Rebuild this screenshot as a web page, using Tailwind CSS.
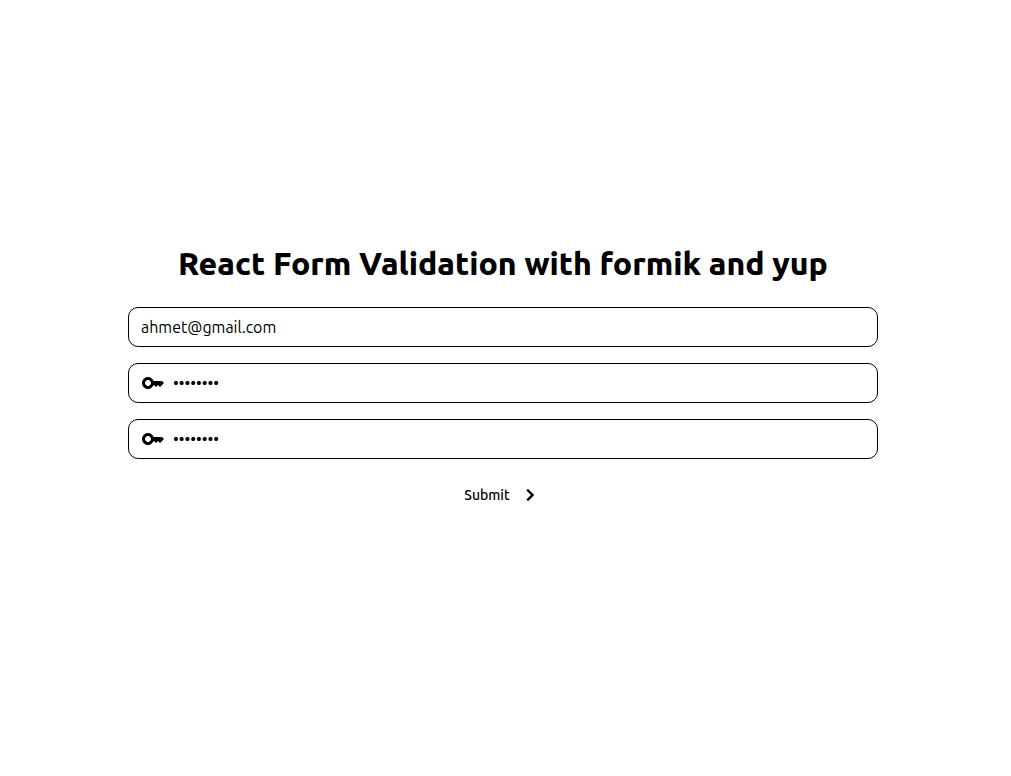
<!DOCTYPE html>
<html lang="en">
<head>
<meta charset="utf-8">
<meta name="viewport" content="width=device-width, initial-scale=1">
<title>React Form Validation</title>
<script src="https://cdn.jsdelivr.net/npm/@tailwindcss/browser@4"></script>
</head>
<body class="bg-white text-black font-['Ubuntu','Noto_Sans',sans-serif]">
<main class="flex min-h-screen flex-col items-center justify-center pl-32 pr-[133px] pb-6">
  <h1 class="mb-[18px] text-center text-[32px] leading-[52px] font-extrabold whitespace-nowrap">React Form Validation with formik and yup</h1>
  <form class="flex w-full flex-col gap-4">
    <input type="email" aria-label="Email" value="ahmet@gmail.com" class="h-10 w-full rounded-[10px] border border-black px-3 text-base font-[450] outline-none">
    <label class="flex h-10 items-center gap-2 rounded-[10px] border border-black px-3">
      <svg class="h-6 w-6 shrink-0" viewBox="0 0 24 24" aria-hidden="true"><path d="M21 10h-8.350C11.830 7.670 9.610 6 7 6c-3.310 0-6 2.690-6 6s2.690 6 6 6c2.610 0 4.830-1.670 5.650-4H13l2 2 2-2 2 2 4-4.040L21 10zM7 15c-1.650 0-3-1.350-3-3s1.350-3 3-3 3 1.350 3 3-1.350 3-3 3z"/></svg>
      <input type="password" aria-label="Password" value="password" class="w-full text-base font-[450] outline-none">
    </label>
    <label class="flex h-10 items-center gap-2 rounded-[10px] border border-black px-3">
      <svg class="h-6 w-6 shrink-0" viewBox="0 0 24 24" aria-hidden="true"><path d="M21 10h-8.350C11.830 7.670 9.610 6 7 6c-3.310 0-6 2.690-6 6s2.690 6 6 6c2.610 0 4.830-1.670 5.650-4H13l2 2 2-2 2 2 4-4.040L21 10zM7 15c-1.650 0-3-1.350-3-3s1.350-3 3-3 3 1.350 3 3-1.350 3-3 3z"/></svg>
      <input type="password" aria-label="Confirm password" value="password" class="w-full text-base font-[450] outline-none">
    </label>
    <button type="submit" class="flex h-10 items-center gap-2 self-center text-sm font-[550]">Submit
      <svg class="h-6 w-6" viewBox="0 0 24 24" aria-hidden="true"><path stroke="currentColor" stroke-width=".4" d="M10 6 8.590 7.410 13.170 12l-4.580 4.590L10 18l6-6z"/></svg>
    </button>
  </form>
</main>
</body>
</html>
